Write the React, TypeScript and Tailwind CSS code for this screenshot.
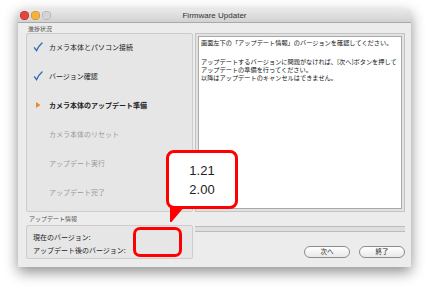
import React from "react";

const jp = { fontFamily: '"Lucida Grande", "Noto Sans CJK JP", "Liberation Sans", sans-serif' };

type Step = { label: string; state: "done" | "current" | "todo" };

const steps: Step[] = [
  { label: "カメラ本体とパソコン接続", state: "done" },
  { label: "バージョン確認", state: "done" },
  { label: "カメラ本体のアップデート準備", state: "current" },
  { label: "カメラ本体のリセット", state: "todo" },
  { label: "アップデート実行", state: "todo" },
  { label: "アップデート完了", state: "todo" },
];

function StepIcon({ state }: { state: Step["state"] }) {
  if (state === "done") {
    return (
      <svg width="10" height="10" viewBox="0 0 10 10" aria-hidden="true">
        <path d="M1.5 5.8 L3.6 8.6 Q5.5 4 9 1" fill="none" stroke="#2f6db5" strokeWidth="1.4" strokeLinecap="round" />
      </svg>
    );
  }
  if (state === "current") {
    return (
      <svg width="10" height="10" viewBox="0 0 10 10" aria-hidden="true">
        <path d="M3 2 L7.5 5 L3 8 Z" fill="#ec8a2a" />
      </svg>
    );
  }
  return <span className="inline-block h-[10px] w-[10px]" />;
}

export default function App() {
  return (
    <div className="relative h-[295px] w-[430px] overflow-hidden bg-white" style={jp}>
      <div className="ml-[18px] mt-[9px] flex h-[258px] w-[393px] flex-col rounded-t-[4px] bg-[#ececec] shadow-[0_5px_14px_rgba(0,0,0,0.45)]">
        {/* title bar */}
        <div className="flex h-[14px] shrink-0 items-center rounded-t-[4px] border-b border-[#a9a9a9] bg-gradient-to-b from-[#e9e9e9] to-[#d2d2d2]">
          <div className="flex w-[40px] items-center gap-[2px] pl-[2px]">
            <span className="h-[9px] w-[9px] rounded-full bg-[#e2463f] shadow-[inset_0_0_0_0.5px_rgba(120,0,0,0.5)]" />
            <span className="h-[9px] w-[9px] rounded-full bg-[#f1b33b] shadow-[inset_0_0_0_0.5px_rgba(140,80,0,0.5)]" />
            <span className="h-[9px] w-[9px] rounded-full bg-[#d4d4d4] shadow-[inset_0_0_0_0.5px_rgba(0,0,0,0.25)]" />
          </div>
          <div className="flex-1 text-center text-[8px] leading-[14px] text-[#333]" style={{ fontFamily: '"Liberation Sans", sans-serif' }}>
            Firmware Updater
          </div>
          <div className="w-[40px]" />
        </div>

        {/* body */}
        <div className="flex gap-[2px] pl-[8px] pt-[1px]">
          {/* left column */}
          <div className="flex w-[167px] flex-col">
            <div className="h-[9px] pl-[2px] text-[6px] leading-[9px] text-[#555]">進捗状況</div>
            <div className="flex h-[179px] flex-col gap-[13px] rounded-[2px] border border-[#cdcdcd] bg-[#e6e6e6] pl-[6px] pt-[5px]">
              {steps.map((s) => (
                <div key={s.label} className="flex h-[16px] items-center gap-[6px]">
                  <StepIcon state={s.state} />
                  <span
                    className={`text-[7px] leading-[16px] ${
                      s.state === "todo"
                        ? "text-[#9a9a9a]"
                        : s.state === "current"
                          ? "font-bold text-[#222]"
                          : "text-[#222]"
                    }`}
                  >
                    {s.label}
                  </span>
                </div>
              ))}
            </div>
            <div className="h-[13px] pl-[3px] text-[6px] leading-[14px] text-[#555]">アップデート情報</div>
            <div className="flex h-[34px] flex-col rounded-[2px] border border-[#cdcdcd] bg-[#e6e6e6] pl-[6px] pt-[5px] text-[7px] leading-[13px] text-[#222]">
              <div>現在のバージョン:</div>
              <div>アップデート後のバージョン:</div>
            </div>
          </div>

          {/* right column */}
          <div className="flex w-[210px] flex-col pt-[9px]">
            <div className="h-[179px] border border-[#c4c4c4] bg-[#e2e2e2] p-[2px]">
              <div className="h-full whitespace-nowrap border border-[#a9a9a9] bg-white px-[2px] pt-[2px] text-[6.2px] leading-[8px] text-[#111]">
                <p>画面左下の「アップデート情報」のバージョンを確認してください。</p>
                <p className="mt-[11px]">
                  アップデートするバージョンに問題がなければ、[次へ]ボタンを押して
                  <br />
                  アップデートの準備を行ってください。
                  <br />
                  以降はアップデートのキャンセルはできません。
                </p>
              </div>
            </div>
            <div className="mt-[14px] h-[6px] border-y border-[#bcbcbc] bg-[#dedede]" />
            <div className="mt-[14px] flex justify-end gap-[9px]">
              {["次へ", "終了"].map((b) => (
                <div
                  key={b}
                  className="flex h-[12px] w-[46px] items-center justify-center rounded-full border border-[#8c8c8c] bg-gradient-to-b from-white to-[#e9e9e9] text-[6.5px] text-[#222]"
                >
                  {b}
                </div>
              ))}
            </div>
          </div>
        </div>
      </div>

      {/* callout overlay */}
      <div className="absolute left-[166px] top-[150px] flex h-[59px] w-[72px] flex-col items-center justify-center rounded-[8px] border-[3px] border-[#ff0000] bg-white text-[13px] leading-[19px] text-[#222]" style={{ fontFamily: '"Liberation Sans", sans-serif' }}>
        <div>1.21</div>
        <div>2.00</div>
      </div>
      <svg className="absolute left-[169px] top-[206px]" width="18" height="17" viewBox="0 0 18 17" aria-hidden="true">
        <path d="M1 0 L16 0 L2.5 16 L1 16 Z" fill="#ff0000" />
      </svg>
      <div className="absolute left-[133px] top-[227px] h-[30px] w-[49px] rounded-[7px] border-[3px] border-[#ff0000]" />
    </div>
  );
}
